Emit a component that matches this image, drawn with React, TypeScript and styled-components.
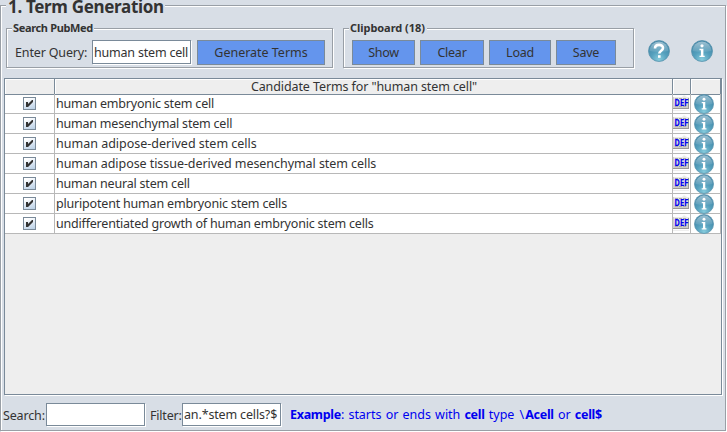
import React from "react";
import styled, { createGlobalStyle } from "styled-components";

const panel = "#d8dee6";
const steel = "#7a8a99";

const Global = createGlobalStyle`
  * { box-sizing: border-box; }
  body { margin: 0; background: ${panel}; overflow: hidden; }
`;

const Page = styled.div`
  width: 727px;
  height: 432px;
  padding-top: 5px;
  background: ${panel};
  color: #333;
  font: 12.5px "Noto Sans", sans-serif;
`;

const Frame = styled.section`
  display: flex;
  flex-direction: column;
  width: 726px;
  height: 426px;
  padding: 0 3px;
  border: 1px solid #999fa6;
  box-shadow: 1px 1px 0 #fff, inset 1px 1px 0 #fff;
`;

const FrameTitle = styled.h1`
  align-self: flex-start;
  flex: none;
  margin: -6px 0 14px 2px;
  padding: 0 1px 0 2px;
  width: 159px;
  background: ${panel};
  font-size: 17px;
  font-weight: bold;
  line-height: 14px;
  letter-spacing: -0.32px;
  white-space: nowrap;
`;

const Toolbar = styled.div`
  display: flex;
  flex: none;
  height: 50px;
  padding-left: 2px;
`;

const Group = styled.div<{ $width: number; $gap?: number }>`
  flex: none;
  width: ${(p) => p.$width}px;
  height: 40px;
  margin-right: ${(p) => p.$gap ?? 0}px;
  padding: 0 8px;
  border: 1px solid #999fa6;
  box-shadow: 1px 1px 0 #fff, inset 1px 1px 0 #fff;
`;

const GroupTitle = styled.h2<{ $spacing: number; $width: number }>`
  width: ${(p) => p.$width}px;
  margin: -8px 0 5px -3px;
  padding-left: 1px;
  background: ${panel};
  font-size: 11px;
  font-weight: bold;
  line-height: 14px;
  letter-spacing: ${(p) => p.$spacing}px;
  white-space: nowrap;
`;

const Controls = styled.div`
  display: flex;
  gap: 5px;
`;

const Label = styled.label<{ $width: number; $spacing?: number }>`
  flex: none;
  width: ${(p) => p.$width}px;
  line-height: 25px;
  letter-spacing: ${(p) => p.$spacing ?? -0.15}px;
  white-space: nowrap;
`;

const Field = styled.input<{ $width: number; $height: number; $spacing?: number }>`
  flex: none;
  width: ${(p) => p.$width}px;
  height: ${(p) => p.$height}px;
  padding: 0 1px;
  border: 1px solid ${steel};
  border-radius: 0;
  outline: 0;
  background: #fff;
  box-shadow: 1px 1px 0 #fff;
  color: #333;
  font: inherit;
  letter-spacing: ${(p) => p.$spacing ?? -0.15}px;
`;

const Button = styled.button<{ $width: number; $spacing?: number; $indent?: number }>`
  flex: none;
  width: ${(p) => p.$width}px;
  height: 25px;
  margin-left: ${(p) => p.$indent ?? 0}px;
  padding: 0;
  border: 1px solid ${steel};
  border-radius: 0;
  background: #6495ed;
  color: #333;
  font: inherit;
  line-height: 23px;
  letter-spacing: ${(p) => p.$spacing ?? -0.25}px;
`;

const HelpIcons = styled.div`
  display: flex;
  gap: 21px;
  padding: 12px 0 0 13.5px;
`;

const TableBox = styled.div`
  flex: none;
  width: 718px;
  height: 317px;
  border: 1px solid ${steel};
  background: #eee;
  box-shadow: 1px 1px 0 #fff;
`;

const columns = "50px 618px 18px 30px";

const HeaderRow = styled.div`
  display: grid;
  grid-template-columns: ${columns};
  height: 15px;
`;

const HeaderCell = styled.div`
  border-right: 1px solid ${steel};
  border-bottom: 1px solid ${steel};
  box-shadow: inset 1px 1px 0 #fff;
  line-height: 15px;
  letter-spacing: -0.1px;
  padding-left: 1px;
  text-align: center;
`;

const Row = styled.div`
  display: grid;
  grid-template-columns: ${columns};
  height: 20px;
  background: #fff;
`;

const Cell = styled.div<{ $align?: string }>`
  display: flex;
  justify-content: ${(p) => p.$align ?? "center"};
  height: 20px;
  border-right: 1px solid #b8b8b8;
  border-bottom: 1px solid #b8b8b8;
`;

const InfoCell = styled(Cell)`
  padding-left: 3px;
`;

const TermCell = styled(Cell)<{ $spacing: number }>`
  padding-left: 1px;
  line-height: 19px;
  letter-spacing: ${(p) => p.$spacing}px;
  white-space: nowrap;
`;

const CheckBox = styled.span`
  width: 13px;
  height: 13px;
  margin-top: 3px;
  border: 1px solid ${steel};
  background: linear-gradient(160deg, #fff 15%, #dce7f3 55%, #b8cfe5);
  svg { display: block; }
`;

const Footer = styled.div`
  display: flex;
  padding-top: 8px;
  margin-left: -1px;
`;

const FilterGroup = styled.div`
  display: flex;
  margin-left: 5px;
`;

const Hint = styled.p`
  margin: 0 0 0 9px;
  color: #0000f0;
  line-height: 24px;
  letter-spacing: -0.03px;
  word-spacing: 1px;
  white-space: nowrap;
  b { letter-spacing: -0.3px; }
`;

const Slash = styled.span`
  margin: 0 1px;
`;

const Round = styled.svg`
  display: block;
  flex: none;
`;

function BlueIcon({ size, kind }: { size: number; kind: "help" | "info" }) {
  return (
    <Round width={size} height={size} viewBox="0 0 22 22">
      <defs>
        <radialGradient id="ball" cx="50%" cy="90%" r="85%">
          <stop offset="0" stopColor="#86cbdc" />
          <stop offset="0.45" stopColor="#55a0bd" />
          <stop offset="1" stopColor="#3d82a4" />
        </radialGradient>
        <linearGradient id="gloss" x1="0" y1="0" x2="0" y2="1">
          <stop offset="0" stopColor="#fff" stopOpacity="0.5" />
          <stop offset="1" stopColor="#fff" stopOpacity="0.08" />
        </linearGradient>
      </defs>
      <circle cx="11" cy="11" r="10.5" fill="url(#ball)" stroke="#5993ad" strokeWidth="0.8" />
      <path d="M1.5 11a9.5 9.5 0 0 1 19 0Q11 13 1.5 11Z" fill="url(#gloss)" />
      {kind === "info" ? (
        <g fill="#fff">
          <circle cx="11" cy="5.8" r="1.6" />
          <path d="M8.5 8.8h3.9v6.9h1.3V17H8.5v-1.3h1.4v-5.5H8.5Z" />
        </g>
      ) : (
        <g fill="none" stroke="#fff" strokeWidth="2.6">
          <path d="M7 8.5C7 3.6 15 3.8 15 8c0 2.7-3.7 2.8-3.7 5.6" />
          <path d="M11.3 15.2v2.6" />
        </g>
      )}
    </Round>
  );
}

function DefIcon() {
  return (
    <Round width="17" height="19" viewBox="0 0 17 19">
      <defs>
        <linearGradient id="paper" x1="0" y1="0" x2="0" y2="1">
          <stop offset="0" stopColor="#f0f0f0" />
          <stop offset="1" stopColor="#c8c8c8" />
        </linearGradient>
      </defs>
      <path d="M0 3h9l2-2 3 2h2v12H0Z" fill="url(#paper)" />
      <path d="M0.5 3v12" stroke="#d0d0d0" />
      <path d="M0 14.5h16M15.5 4v11" stroke="#999" />
      <path d="M0 16.5h16" stroke="#eee" />
      <path d="M2 4.5h11M2 12.5h12" stroke="#aaa" strokeDasharray="3 1" />
      <text x="1.6" y="11.6" fill="#0000f0" fontFamily="DejaVu Sans, sans-serif" fontSize="8" fontWeight="bold" textLength="14" lengthAdjust="spacingAndGlyphs">
        DEF
      </text>
    </Round>
  );
}

const terms: { name: string; spacing: number }[] = [
  { name: "human embryonic stem cell", spacing: -0.19 },
  { name: "human mesenchymal stem cell", spacing: -0.21 },
  { name: "human adipose-derived stem cells", spacing: 0 },
  { name: "human adipose tissue-derived mesenchymal stem cells", spacing: -0.06 },
  { name: "human neural stem cell", spacing: -0.19 },
  { name: "pluripotent human embryonic stem cells", spacing: -0.19 },
  { name: "undifferentiated growth of human embryonic stem cells", spacing: -0.2 },
];

export default function App() {
  return (
    <Page>
      <Global />
      <Frame>
        <FrameTitle>1. Term Generation</FrameTitle>
        <Toolbar>
          <Group $width={327} $gap={10}>
            <GroupTitle $width={82} $spacing={-0.35}>Search PubMed</GroupTitle>
            <Controls>
              <Label $width={72}>Enter Query:</Label>
              <Field $width={99} $height={24} $spacing={-0.2} defaultValue="human stem cell" />
              <Button $width={128} $spacing={-0.02} $indent={1}>Generate Terms</Button>
            </Controls>
          </Group>
          <Group $width={291}>
            <GroupTitle $width={78} $spacing={-0.05}>Clipboard (18)</GroupTitle>
            <Controls>
              <Button $width={63}>Show</Button>
              <Button $width={64}>Clear</Button>
              <Button $width={62}>Load</Button>
              <Button $width={60}>Save</Button>
            </Controls>
          </Group>
          <HelpIcons>
            <BlueIcon size={22} kind="help" />
            <BlueIcon size={22} kind="info" />
          </HelpIcons>
        </Toolbar>
        <TableBox>
          <HeaderRow>
            <HeaderCell />
            <HeaderCell>Candidate Terms for "human stem cell"</HeaderCell>
            <HeaderCell />
            <HeaderCell />
          </HeaderRow>
          {terms.map((term) => (
            <Row key={term.name}>
              <Cell>
                <CheckBox>
                  <svg width="11" height="11" viewBox="0 0 11 11">
                    <path d="M2 4h2v2l4-4h1v2L4 9H2Z" fill="#333" />
                  </svg>
                </CheckBox>
              </Cell>
              <TermCell $align="flex-start" $spacing={term.spacing}>{term.name}</TermCell>
              <Cell><DefIcon /></Cell>
              <InfoCell $align="flex-start"><BlueIcon size={20} kind="info" /></InfoCell>
            </Row>
          ))}
        </TableBox>
        <Footer>
          <Label $width={43}>Search:</Label>
          <Field $width={99} $height={23} />
          <FilterGroup>
            <Label $width={32} $spacing={-0.2}>Filter:</Label>
            <Field $width={99} $height={23} defaultValue="an.*stem cells?$" />
          </FilterGroup>
          <Hint>
            <b>Example</b>: starts or ends with <b>cell</b> type <Slash>\</Slash><b>Acell</b> or <b>cell$</b>
          </Hint>
        </Footer>
      </Frame>
    </Page>
  );
}
